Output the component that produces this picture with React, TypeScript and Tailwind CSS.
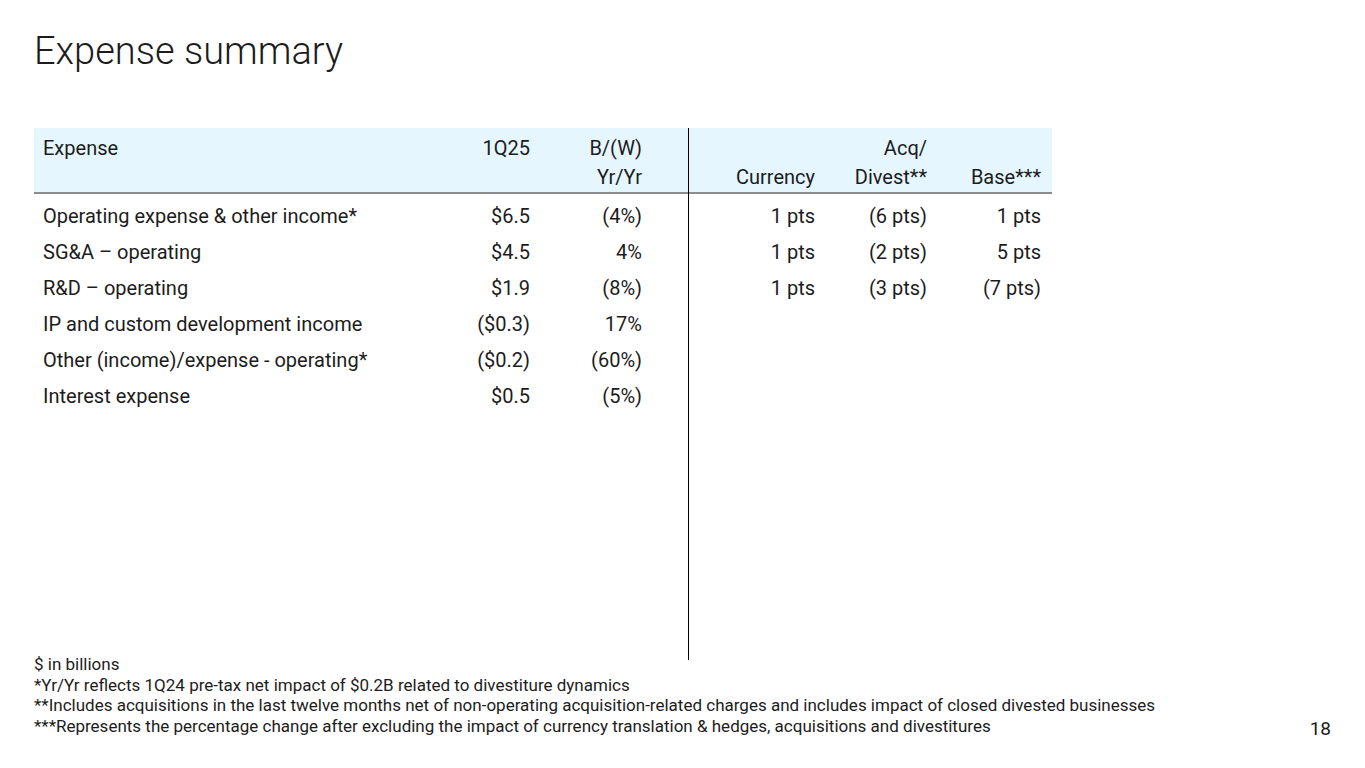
const rows = [
  ["Operating expense & other income*", "$6.5", "(4%)", "1 pts", "(6 pts)", "1 pts"],
  ["SG&A \u2013 operating", "$4.5", "4%", "1 pts", "(2 pts)", "5 pts"],
  ["R&D \u2013 operating", "$1.9", "(8%)", "1 pts", "(3 pts)", "(7 pts)"],
  ["IP and custom development income", "($0.3)", "17%", "", "", ""],
  ["Other (income)/expense - operating*", "($0.2)", "(60%)", "", "", ""],
  ["Interest expense", "$0.5", "(5%)", "", "", ""],
];

const footnotes = [
  "$ in billions",
  "*Yr/Yr reflects 1Q24 pre-tax net impact of $0.2B related to divestiture dynamics",
  "**Includes acquisitions in the last twelve months net of non-operating acquisition-related charges and includes impact of closed divested businesses",
  "***Represents the percentage change after excluding the impact of currency translation & hedges, acquisitions and divestitures",
];

export default function App() {
  return (
    <div
      className="w-[1365px] h-[768px] bg-white text-[#1c1c1c] flex flex-col overflow-hidden"
      style={{ fontFamily: "Roboto, 'Liberation Sans', sans-serif" }}
    >
      <h1 className="pl-[34px] pt-[28px] text-[38px] leading-[46px] font-light">
        Expense summary
      </h1>

      <div className="mt-[54px] ml-[34px] flex w-[1018px] text-[20px]">
        {/* left block */}
        <div className="w-[654px] flex flex-col">
          <div className="h-[66px] bg-[#e5f6ff] border-b-2 border-[#8d8d8d] pt-[6px] pl-[9px] pr-[46px] flex">
            <div className="flex-1 leading-[29px]">Expense</div>
            <div className="w-[100px] text-right leading-[29px]">1Q25</div>
            <div className="w-[112px] text-right leading-[29px]">
              <div>B/(W)</div>
              <div>Yr/Yr</div>
            </div>
          </div>
          <div className="pt-[4px]">
            {rows.map((r) => (
              <div key={r[0]} className="h-[36px] flex items-center pl-[9px] pr-[46px]">
                <div className="flex-1">{r[0]}</div>
                <div className="w-[100px] text-right">{r[1]}</div>
                <div className="w-[112px] text-right">{r[2]}</div>
              </div>
            ))}
          </div>
        </div>

        {/* right block */}
        <div className="w-[364px] h-[532px] flex flex-col border-l border-black">
          <div className="h-[66px] bg-[#e5f6ff] border-b-2 border-[#8d8d8d] pt-[6px] pr-[11px] flex items-end">
            <div className="flex-1 text-right leading-[29px]">Currency</div>
            <div className="w-[112px] text-right leading-[29px]">
              <div>Acq/</div>
              <div>Divest**</div>
            </div>
            <div className="w-[114px] text-right leading-[29px]">Base***</div>
          </div>
          <div className="pt-[4px]">
            {rows.slice(0, 3).map((r) => (
              <div key={r[0]} className="h-[36px] flex items-center pr-[11px]">
                <div className="flex-1 text-right">{r[3]}</div>
                <div className="w-[112px] text-right">{r[4]}</div>
                <div className="w-[114px] text-right">{r[5]}</div>
              </div>
            ))}
          </div>
        </div>
      </div>

      <div className="mt-[-6px] pl-[34px] pr-[34px] flex justify-between items-end">
        <div className="text-[17px] leading-[20.6px]">
          {footnotes.map((f) => (
            <div key={f}>{f}</div>
          ))}
        </div>
        <div className="text-[19px] leading-[22px] mb-[-4px]">18</div>
      </div>
    </div>
  );
}
